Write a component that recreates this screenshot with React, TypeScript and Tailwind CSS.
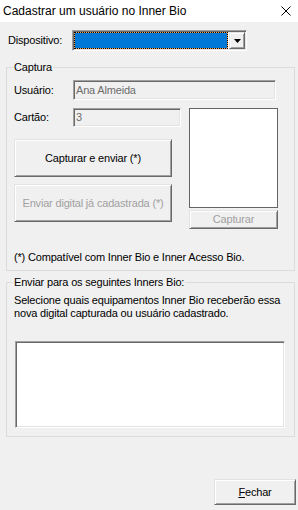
import React from 'react';

const sunken =
  'border border-t-[#a0a0a0] border-l-[#a0a0a0] border-b-white border-r-white shadow-[inset_1px_1px_0_#696969,inset_-1px_-1px_0_#e3e3e3]';
const raised =
  'border border-t-[#e3e3e3] border-l-[#e3e3e3] border-b-[#696969] border-r-[#696969] shadow-[inset_1px_1px_0_#fff,inset_-1px_-1px_0_#a0a0a0] bg-[#f0f0f0]';

function Btn({ children, className, disabled }: { children: React.ReactNode; className: string; disabled?: boolean }) {
  return (
    <div className={`${raised} ${className} flex items-center justify-center ${disabled ? 'text-[#a0a0a0]' : 'text-black'}`}>
      {children}
    </div>
  );
}

export default function App() {
  return (
    <div className="w-[298px] h-[510px] bg-[#f0f0f0] flex flex-col text-[11px] leading-[13px] tracking-[-0.18px] text-black font-['Liberation_Sans',Arial,sans-serif] overflow-hidden">
      {/* title bar */}
      <div className="h-[22px] bg-white flex items-center justify-between pl-[3px] pr-[7px] shrink-0 tracking-normal">
        <span className="text-[12px] leading-[14px]">Cadastrar um usuário no Inner Bio</span>
        <svg width="10" height="10" viewBox="0 0 10 10">
          <path d="M0.5 0.5 L9.5 9.5 M9.5 0.5 L0.5 9.5" stroke="#000" strokeWidth="1" />
        </svg>
      </div>

      {/* device */}
      <div className="mt-[8px] flex items-center h-[21px] pl-[8px]">
        <span className="w-[64px]">Dispositivo:</span>
        <div className={`${sunken} w-[175px] h-[21px] bg-white flex items-stretch p-[1px]`}>
          <div className="flex-1 bg-[#f7a04c] flex mr-[1px]">
            <div className="flex-1 bg-[#0078d7] bg-clip-padding border border-dotted border-black" />
          </div>
          <div className={`${raised} w-[16px] flex items-center justify-center`}>
            <svg width="7" height="4" viewBox="0 0 7 4">
              <path d="M0 0 H7 L3.5 4 Z" fill="#000" />
            </svg>
          </div>
        </div>
      </div>

      {/* captura */}
      <fieldset className="mt-[10px] ml-[6px] w-[289px] border border-[#dcdcdc] px-[7px] pb-[6px]">
        <legend className="px-[1px] -ml-[1px]">Captura</legend>
        <div className="mt-[6px] flex items-center h-[20px]">
          <span className="w-[59px]">Usuário:</span>
          <div className={`${sunken} w-[203px] h-[20px] bg-[#f0f0f0] flex items-center pl-[2px] text-[#6d6d6d]`}>Ana Almeida</div>
        </div>
        <div className="mt-[8px] flex">
          <div className="w-[175px] flex flex-col">
            <div className="flex items-center h-[19px]">
              <span className="w-[59px] shrink-0">Cartão:</span>
              <div className={`${sunken} w-[108px] shrink-0 h-[19px] bg-[#f0f0f0] flex items-center pl-[2px] text-[#6d6d6d]`}>3</div>
            </div>
            <Btn className="mt-[12px] w-[158px] h-[38px]">Capturar e enviar (*)</Btn>
            <Btn className="mt-[7px] w-[158px] h-[38px]" disabled>
              Enviar digital já cadastrada (*)
            </Btn>
          </div>
          <div className="flex flex-col">
            <div className="w-[89px] h-[100px] bg-white border border-[#646464]" />
            <Btn className="mt-[2px] w-[89px] h-[19px]" disabled>
              Capturar
            </Btn>
          </div>
        </div>
        <div className="mt-[22px] whitespace-nowrap">(*) Compatível com Inner Bio e Inner Acesso Bio.</div>
      </fieldset>

      {/* envio */}
      <fieldset className="mt-[5px] ml-[6px] w-[289px] border border-[#dcdcdc] px-[7px] pb-[8px]">
        <legend className="px-[1px] -ml-[1px]">Enviar para os seguintes Inners Bio:</legend>
        <div className="mt-[5px] whitespace-nowrap">
          Selecione quais equipamentos Inner Bio receberão essa
          <br />
          nova digital capturada ou usuário cadastrado.
        </div>
        <div className={`${sunken} mt-[21px] ml-[1px] w-[270px] h-[87px] bg-white`} />
      </fieldset>

      <div className="mt-[42px] flex justify-end pr-[2px]">
        <Btn className="w-[82px] h-[26px]">
          <span>
            <span className="underline">F</span>echar
          </span>
        </Btn>
      </div>
    </div>
  );
}
